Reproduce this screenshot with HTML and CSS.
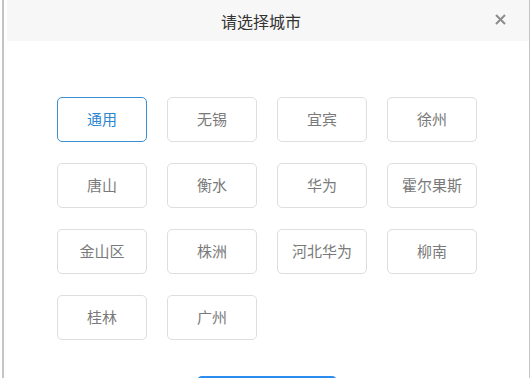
FILE: index.html
```html
<!DOCTYPE html>
<html lang="zh-CN">
<head>
    <meta charset="UTF-8">
    <meta name="viewport" content="width=device-width, initial-scale=1.0">
    <title>请选择城市</title>
    <link rel="stylesheet" href="styles.css">
</head>
<body>
    <div class="modal">
        <div class="modal-header">
            <span class="modal-title">请选择城市</span>
            <span class="modal-close">
                <svg width="11" height="11" viewBox="0 0 11 11">
                    <path d="M1 1 L10 10 M10 1 L1 10" stroke="#8c8c8c" stroke-width="2" fill="none"/>
                </svg>
            </span>
        </div>
        <div class="modal-body">
            <div class="city-grid">
                <div class="city active">通用</div>
                <div class="city">无锡</div>
                <div class="city">宜宾</div>
                <div class="city">徐州</div>
                <div class="city">唐山</div>
                <div class="city">衡水</div>
                <div class="city">华为</div>
                <div class="city">霍尔果斯</div>
                <div class="city">金山区</div>
                <div class="city">株洲</div>
                <div class="city">河北华为</div>
                <div class="city">柳南</div>
                <div class="city">桂林</div>
                <div class="city">广州</div>
            </div>
            <div class="modal-footer">
                <button class="confirm-button">确定</button>
            </div>
        </div>
    </div>
</body>
</html>
```

FILE: styles.css
```css
* {
    margin: 0;
    padding: 0;
    box-sizing: border-box;
}

body {
    font-family: 'Noto Sans CJK SC', 'Microsoft YaHei', sans-serif;
    background: #ffffff;
    overflow: hidden;
}

.modal {
    margin-left: 2px;
    width: 528px;
    height: 378px;
    overflow: hidden;
    border-left: 2px solid #c4c4c4;
    border-right: 1px solid #c4c4c4;
    background: #ffffff;
}

.modal-header {
    height: 41px;
    margin-left: 3px;
    background: #f7f7f7;
    display: flex;
    align-items: center;
    justify-content: center;
    position: relative;
    padding-right: 14px;
}

.modal-title {
    font-size: 16px;
    color: #333333;
    line-height: 1;
}

.modal-close {
    position: absolute;
    right: 23px;
    top: 14px;
    display: flex;
}

.modal-body {
    padding: 56px 0 0 53px;
}

.city-grid {
    display: grid;
    grid-template-columns: repeat(4, 90px);
    grid-auto-rows: 45px;
    column-gap: 20px;
    row-gap: 21px;
}

.city {
    border: 1px solid #dcdee2;
    border-radius: 5px;
    display: flex;
    align-items: center;
    justify-content: center;
    font-size: 15px;
    color: #7a7a7a;
    padding-bottom: 3px;
}

.city.active {
    border-color: #3a8fd0;
    color: #2d86d2;
}

.modal-footer {
    display: flex;
    justify-content: center;
    margin-top: 36px;
    margin-left: -53px;
}

.confirm-button {
    width: 140px;
    height: 40px;
    border: none;
    border-radius: 5px;
    background: #2d8cf0;
    color: #ffffff;
    font-family: inherit;
    font-size: 15px;
}
```
